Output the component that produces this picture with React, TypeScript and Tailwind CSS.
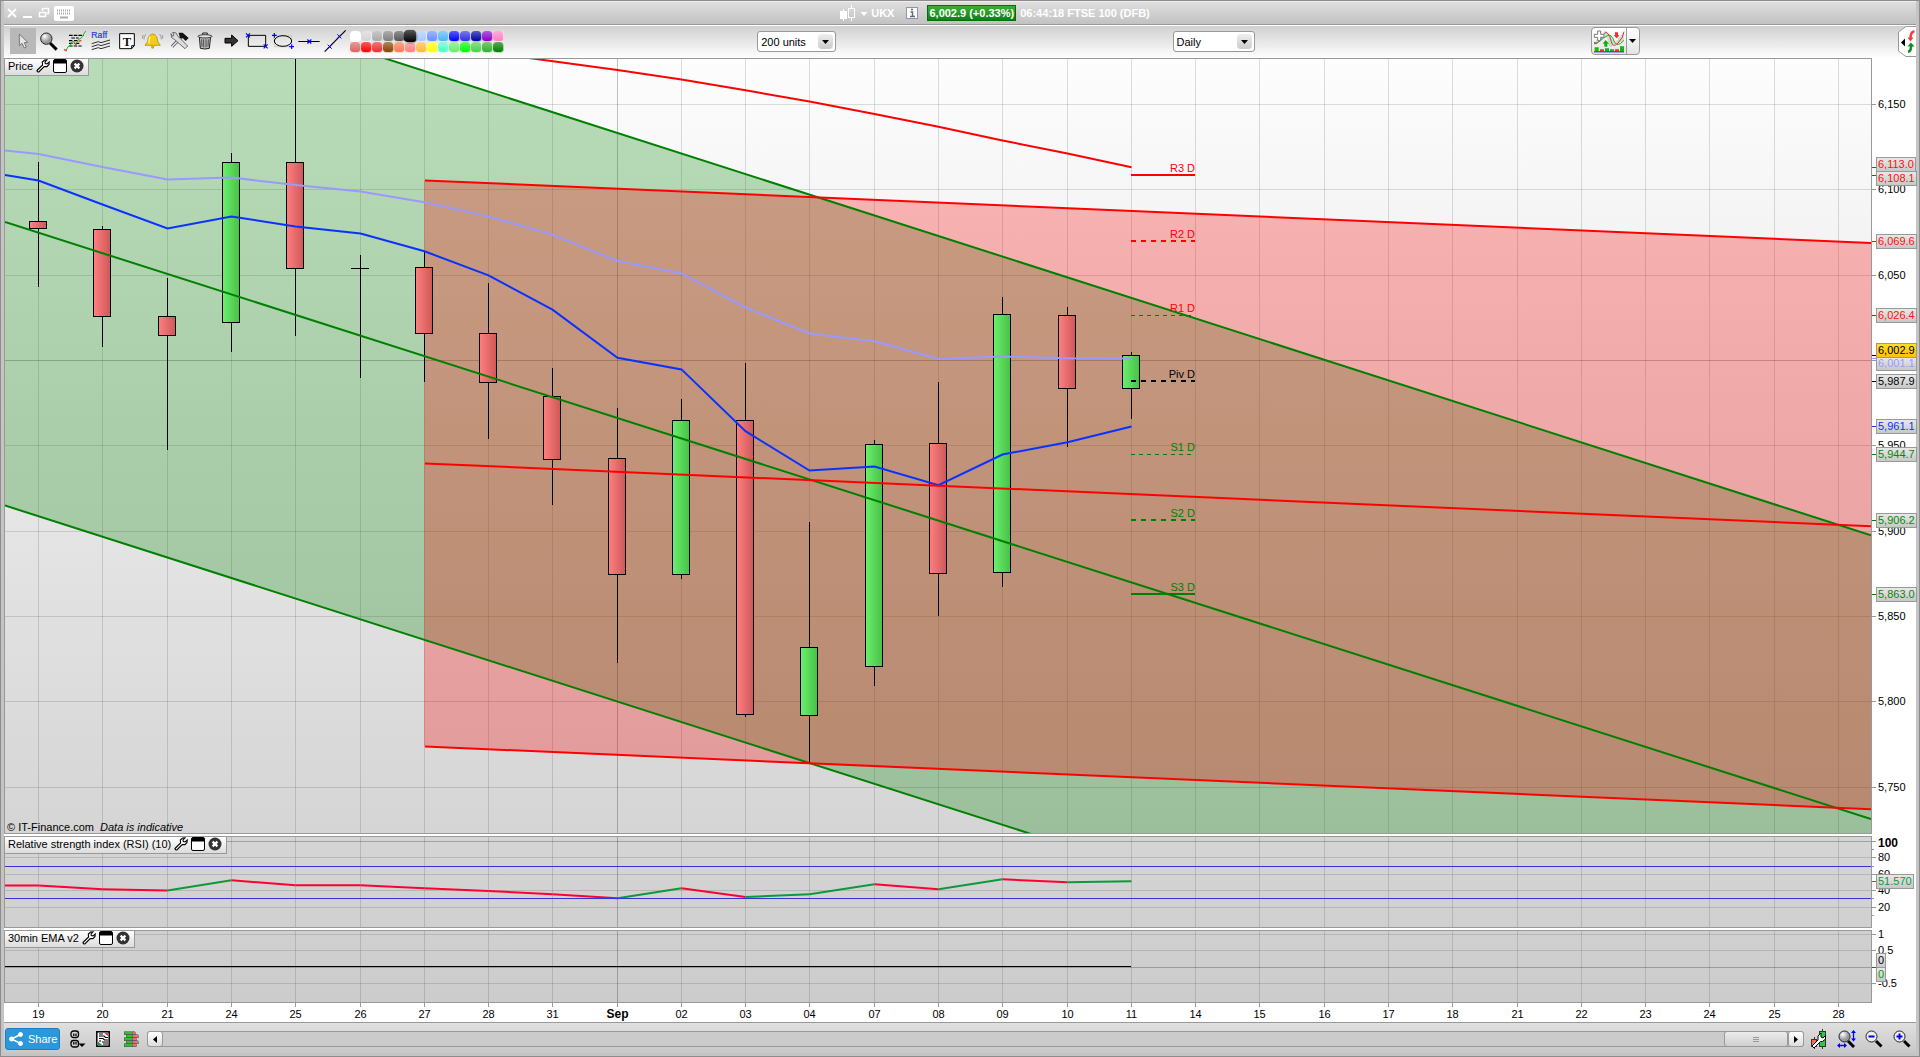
import React from "react";

type Pt = [number, number];

/* ---------- chart data (drawing units) ---------- */

const DATES = [
  "19", "20", "21", "24", "25", "26", "27", "28", "31", "Sep", "02", "03", "04", "07", "08",
  "09", "10", "11", "14", "15", "16", "17", "18", "21", "22", "23", "24", "25", "28",
];
const colX = (i: number) => Math.floor(38.62 + i * 64.28);

type Candle = { i: number; hi: number; lo: number; top: number; bottom: number; up?: boolean };
const CANDLES: Candle[] = [
  { i: 0, hi: 162, lo: 287, top: 221, bottom: 229 },
  { i: 1, hi: 226, lo: 347, top: 229, bottom: 317 },
  { i: 2, hi: 278, lo: 450, top: 316, bottom: 336 },
  { i: 3, hi: 153, lo: 352, top: 162, bottom: 323, up: true },
  { i: 4, hi: 59, lo: 336, top: 162, bottom: 269 },
  { i: 5, hi: 255, lo: 378, top: 268, bottom: 269 },
  { i: 6, hi: 252, lo: 382, top: 267, bottom: 334 },
  { i: 7, hi: 283, lo: 439, top: 333, bottom: 383 },
  { i: 8, hi: 368, lo: 505, top: 396, bottom: 460 },
  { i: 9, hi: 408, lo: 663, top: 458, bottom: 575 },
  { i: 10, hi: 399, lo: 579, top: 420, bottom: 575, up: true },
  { i: 11, hi: 363, lo: 717, top: 420, bottom: 715 },
  { i: 12, hi: 522, lo: 763, top: 647, bottom: 716, up: true },
  { i: 13, hi: 440, lo: 686, top: 444, bottom: 667, up: true },
  { i: 14, hi: 382, lo: 616, top: 443, bottom: 574 },
  { i: 15, hi: 297, lo: 587, top: 314, bottom: 573, up: true },
  { i: 16, hi: 307, lo: 447, top: 315, bottom: 389 },
  { i: 17, hi: 352, lo: 419, top: 355, bottom: 389, up: true },
];

const FAST = [180.5, 204.5, 228.5, 216.5, 226.5, 233.5, 251.3, 275.4, 309.7, 357.7, 369.4, 431.2, 470.5, 466.5, 485.2, 454.5, 442.3, 426.5];
const SLOW = [154, 167, 179.5, 177.5, 185, 191.5, 202.3, 216.6, 234.6, 261, 273.4, 307.5, 333.4, 341.3, 359, 356.5, 358.3, 358.5];
const LONG = [70, 79.4, 90.3, 101.6, 113.9, 126.7, 140.5, 153.5, 167.3];
const RSI = [885.5, 889.3, 890.5, 880.3, 885.3, 885.3, 888.3, 891, 894.3, 898.3, 888.3, 897, 894.3, 884.3, 889.3, 879.3, 882.3, 881.3];

const series = (ys: number[], first: Pt, from = 0) =>
  [first, ...ys.map((y, k): Pt => [colX(k + from) + 0.5, y])].map((p) => p.join(",")).join(" ");

const PIVOTS = [
  { label: "R3 D", y: 175, w: 2, dash: undefined, text: "text-[#ff0000]", color: "#ff0000" },
  { label: "R2 D", y: 241, w: 2, dash: "5 5", text: "text-[#ff0000]", color: "#ff0000" },
  { label: "R1 D", y: 315.5, w: 1, dash: "4 4", text: "text-[#ff0000]", color: "#ff0000" },
  { label: "Piv D", y: 381, w: 2, dash: "5 5", text: "text-black", color: "#000" },
  { label: "S1 D", y: 454.5, w: 1, dash: "4 4", text: "text-[#008000]", color: "#008000" },
  { label: "S2 D", y: 520, w: 2, dash: "5 5", text: "text-[#008000]", color: "#008000" },
  { label: "S3 D", y: 594, w: 2, dash: undefined, text: "text-[#008000]", color: "#008000" },
];

type AxisLabel = { text: string; y: number; bold?: boolean };
type AxisTag = { text: string; top: number; tick: number; tone: string; line: string; gold?: boolean };

const PRICE_AXIS: AxisLabel[] = [
  { text: "6,150", y: 104 }, { text: "6,100", y: 189 }, { text: "6,050", y: 275 },
  { text: "", y: 360 }, { text: "5,950", y: 445 }, { text: "5,900", y: 531 },
  { text: "5,850", y: 616 }, { text: "5,800", y: 701 }, { text: "5,750", y: 787 },
];
const RED = "text-[#ff1010]";
const GREEN = "text-[#0a860a]";
const PRICE_TAGS: AxisTag[] = [
  { text: "6,113.0", top: 157, tick: 167, tone: RED, line: "bg-[#ff0000]" },
  { text: "6,108.1", top: 171, tick: 175, tone: RED, line: "bg-[#ff0000]" },
  { text: "6,069.6", top: 234, tick: 241, tone: RED, line: "bg-[#ff0000]" },
  { text: "6,026.4", top: 308, tick: 315, tone: RED, line: "bg-[#ff0000]" },
  { text: "6,001.1", top: 356, tick: 358, tone: "text-[#9999ff]", line: "bg-[#9999ff]" },
  { text: "6,002.9", top: 343, tick: 355, tone: "text-black", line: "bg-black", gold: true },
  { text: "5,987.9", top: 374, tick: 381, tone: "text-black", line: "bg-black" },
  { text: "5,961.1", top: 419, tick: 426, tone: "text-[#0a32ff]", line: "bg-[#0a32ff]" },
  { text: "5,944.7", top: 447, tick: 454, tone: GREEN, line: "bg-[#008000]" },
  { text: "5,906.2", top: 513, tick: 520, tone: GREEN, line: "bg-[#008000]" },
  { text: "5,863.0", top: 587, tick: 594, tone: GREEN, line: "bg-[#008000]" },
];
const RSI_AXIS: AxisLabel[] = [
  { text: "100", y: 841, bold: true }, { text: "", y: 849 }, { text: "80", y: 857 },
  { text: "", y: 866 }, { text: "60", y: 874 }, { text: "40", y: 890 },
  { text: "", y: 898 }, { text: "20", y: 907 }, { text: "", y: 915 },
];
const RSI_TAGS: AxisTag[] = [{ text: "51.570", top: 874, tick: 881, tone: "text-[#0a9a3a]", line: "bg-[#0a9a3a]" }];
const EMA_AXIS: AxisLabel[] = [{ text: "1", y: 934 }, { text: "0.5", y: 950 }, { text: "-0.5", y: 983 }];
const EMA_TAGS: AxisTag[] = [
  { text: "0", top: 953, tick: 967, tone: "text-black", line: "bg-[#008000]" },
  { text: "0", top: 967, tick: 967, tone: "text-[#00a000]", line: "bg-[#008000]" },
];

/* ---------- chart parts ---------- */

const left = (x: number) => `${((x - 5) / 1866) * 100}%`;

function Axis({ y0, h, labels, tags }: { y0: number; h: number; labels: AxisLabel[]; tags: AxisTag[] }) {
  const at = (y: number) => ({ top: `${((y - y0) / h) * 100}%` });
  return (
    <div className="relative my-px w-11 shrink-0">
      {labels.map((l, k) => (
        <React.Fragment key={k}>
          <div className={`absolute left-0 h-px bg-[#999] ${l.text || h > 500 ? "w-1" : "w-0.5"}`} style={at(l.y)} />
          {l.text && (
            <span
              className={`absolute left-1.5 -mt-2 text-black ${l.bold ? "text-xs leading-5 font-bold" : "text-[11px] leading-4"}`}
              style={at(l.y)}
            >
              {l.text}
            </span>
          )}
        </React.Fragment>
      ))}
      {tags.map((t, k) => (
        <React.Fragment key={k}>
          <div className={`absolute left-0 h-px w-1 ${t.line}`} style={at(t.tick)} />
          <span
            className={`absolute left-1 h-[15px] border border-[#999] px-px text-[11px] leading-[13px] ${t.tone} ${
              t.gold ? "bg-linear-to-b from-[#ffe020] to-[#ffc010]" : "bg-linear-to-b from-[#e8e8e8] to-[#c8c8c8]"
            }`}
            style={at(t.top)}
          >
            {t.text}
          </span>
        </React.Fragment>
      ))}
    </div>
  );
}

function Wrench() {
  return (
    <svg className="h-3.5 w-3.5" viewBox="0 0 14 14" fill="#fff" stroke="#000" strokeWidth="1.1">
      <path d="M1 11.5 L6.6 6 L6.3 3 L8.5 1 L11 .8 L9 3 L9.3 4.6 L11 5 L13.2 3 L13 5.5 L11 7.6 L8.2 7.5 L2.8 13 Q1.500 13.400 1 11.500Z" />
    </svg>
  );
}

function PanelTag({ title }: { title: string }) {
  return (
    <div className="absolute top-0 left-0 flex h-[17px] items-center gap-[3px] border-r border-b border-[#999] bg-linear-to-b from-white to-[#dcdcdc] pr-1 pb-0.5 pl-[3px] text-[11px] leading-[14px] whitespace-nowrap text-black">
      <span>{title}</span>
      <button aria-label={`${title} settings`}><Wrench /></button>
      <button aria-label={`${title} window`}>
        <svg className="h-3.5 w-3.5" viewBox="0 0 14 14">
          <rect x=".5" y=".5" width="13" height="13" rx="1.500" fill="#fff" stroke="#000" />
          <path d="M1 1h12v3.500H1z" fill="#000" />
        </svg>
      </button>
      <button aria-label={`Close ${title}`}>
        <svg className="h-3.5 w-3.5" viewBox="0 0 14 14">
          <circle cx="7" cy="7" r="6.500" fill="#333" />
          <path d="M4.600 4.600l4.800 4.800M9.400 4.600l-4.800 4.800" stroke="#fff" strokeWidth="2.200" />
        </svg>
      </button>
    </div>
  );
}

function GridLines({ y0, y1, rows, strong }: { y0: number; y1: number; rows: number[]; strong?: number }) {
  return (
    <g shapeRendering="crispEdges" strokeWidth="1">
      {DATES.map((_, i) => (
        <path key={i} d={`M${colX(i) + 0.5} ${y0}V${y1}`} stroke="#000" strokeOpacity={DATES[i] === "Sep" ? 0.24 : 0.13} />
      ))}
      {rows.map((y) => (
        <path key={y} d={`M5 ${y + 0.5}H1871`} stroke="#000" strokeOpacity={y === strong ? 0.24 : 0.13} />
      ))}
    </g>
  );
}

function PricePanel() {
  return (
    <section className="flex min-h-0 flex-[776]">
      <div className="relative min-w-0 flex-1 border border-[#999] bg-linear-to-b from-[#fdfdfd] to-[#d5d5d5]">
        <svg className="absolute inset-0 h-full w-full" viewBox="5 59 1866 774" preserveAspectRatio="none">
          <defs>
            <linearGradient id="up"><stop offset="0" stopColor="#6cf06c" /><stop offset="1" stopColor="#48c048" /></linearGradient>
            <linearGradient id="down"><stop offset="0" stopColor="#ff8080" /><stop offset="1" stopColor="#cc5858" /></linearGradient>
          </defs>
          <GridLines y0={59} y1={833} rows={PRICE_AXIS.map((l) => l.y)} strong={360} />
          <path d="M5 -63.600L1871 535.300V1102.900L5 505.500Z" fill="#008000" fillOpacity=".27" />
          <path d="M424 180.400L1871 243V809.300L424 746.500Z" fill="#ff0000" fillOpacity=".28" />
          <g shapeRendering="crispEdges">
            {CANDLES.map((c) => {
              const x = colX(c.i);
              return (
                <g key={c.i}>
                  <path d={`M${x + 0.5} ${c.hi}V${c.lo}`} stroke="#000" />
                  {c.bottom - c.top > 1 ? (
                    <rect x={x - 8.5} y={c.top + 0.5} width="17" height={c.bottom - c.top - 1} fill={c.up ? "url(#up)" : "url(#down)"} stroke="#000" />
                  ) : (
                    <path d={`M${x - 9} ${c.top + 0.5}h18`} stroke="#000" />
                  )}
                </g>
              );
            })}
          </g>
          <g fill="none" strokeWidth="2">
            <polyline points={series(SLOW, [5, 150.5])} stroke="#9999ff" />
            <polyline points={series(FAST, [5, 175])} stroke="#0a32ff" />
            <polyline points={series(LONG, [529, 58], 9)} stroke="#ff0000" />
            <path d="M5 -63.600L1871 535.300M5 222L1871 819M5 505.500L1871 1102.900" stroke="#008000" />
            <path d="M425 180.400L1871 243M425 463.400L1871 526.300M425 746.500L1871 809.300" stroke="#ff0000" />
            {PIVOTS.map((p) => (
              <path key={p.label} d={`M1131 ${p.y}h64`} stroke={p.color} strokeWidth={p.w} strokeDasharray={p.dash} shapeRendering="crispEdges" />
            ))}
          </g>
        </svg>
        {PIVOTS.map((p) => (
          <span
            key={p.label}
            className={`absolute -translate-x-full -translate-y-full text-[11px] leading-[14px] whitespace-nowrap ${p.text}`}
            style={{ left: left(1195), top: `${((Math.floor(p.y) - 59) / 774) * 100}%` }}
          >
            {p.label}
          </span>
        ))}
        <PanelTag title="Price" />
        <p className="absolute bottom-0 left-0.5 text-[11px] leading-3 whitespace-nowrap text-black">
          © IT-Finance.com <i className="ml-[3px]">Data is indicative</i>
        </p>
      </div>
      <Axis y0={59} h={774} labels={PRICE_AXIS} tags={PRICE_TAGS} />
    </section>
  );
}

function RsiPanel() {
  return (
    <section className="flex min-h-0 flex-[92]">
      <div className="relative min-w-0 flex-1 border border-[#999] bg-linear-to-b from-[#d5d5d5] to-[#d0d0d0]">
        <svg className="absolute inset-0 h-full w-full" viewBox="5 837 1866 90" preserveAspectRatio="none">
          <GridLines y0={837} y1={927} rows={[841, 857, 874, 890, 907]} strong={841} />
          <g strokeWidth="2" strokeLinecap="butt">
            <path d={`M5 885.500H${colX(0) + 0.5}`} stroke="#ff0033" />
            {RSI.slice(1).map((y, k) => (
              <path key={k} d={`M${colX(k) + 0.5} ${RSI[k]}L${colX(k + 1) + 0.5} ${y}`} stroke={y < RSI[k] ? "#0a9a3a" : "#ff0033"} />
            ))}
          </g>
          <path d="M5 866.500H1871M5 898.500H1871" stroke="#3333dd" shapeRendering="crispEdges" />
        </svg>
        <PanelTag title="Relative strength index (RSI) (10)" />
      </div>
      <Axis y0={837} h={90} labels={RSI_AXIS} tags={RSI_TAGS} />
    </section>
  );
}

function EmaPanel() {
  return (
    <section className="flex min-h-0 flex-[73]">
      <div className="relative min-w-0 flex-1 border border-[#999] bg-linear-to-b from-[#d0d0d0] to-[#cccccc]">
        <svg className="absolute inset-0 h-full w-full" viewBox="5 931 1866 71" preserveAspectRatio="none">
          <GridLines y0={931} y1={1002} rows={[934, 950, 967, 983]} strong={967} />
          <path d="M5 966.500H1131" stroke="#000" shapeRendering="crispEdges" />
        </svg>
        <PanelTag title="30min EMA v2" />
      </div>
      <Axis y0={931} h={71} labels={EMA_AXIS} tags={EMA_TAGS} />
    </section>
  );
}

/* ---------- title bar ---------- */

function TitleBar() {
  return (
    <header className="flex h-6 shrink-0 items-center border-t border-b border-t-[#eee] border-b-[#999] bg-linear-to-b from-[#dedede] to-[#c2c2c2] text-[11px] font-bold text-white">
      <div className="flex items-center gap-1 pl-0.5">
        <button aria-label="Close window">
          <svg className="h-3 w-3" viewBox="0 0 12 12" stroke="#fff" strokeWidth="2"><path d="M2 2l8 8M10 2l-8 8" /></svg>
        </button>
        <button aria-label="Minimize window">
          <svg className="h-3 w-3" viewBox="0 0 12 12" stroke="#fff" strokeWidth="2"><path d="M1 10h9" /></svg>
        </button>
        <button aria-label="Restore window">
          <svg className="h-3 w-3" viewBox="0 0 12 12" fill="none" stroke="#fff" strokeWidth="1.500"><path d="M4.500 4V1.500h6v5H8.500" /><rect x="1.500" y="5.500" width="6" height="4" /></svg>
        </button>
        <button aria-label="Keyboard">
          <svg className="h-[15px] w-5" viewBox="0 0 20 15">
            <rect width="20" height="15" rx="2" fill="#fff" />
            <path d="M3 4.500h14M3 7.500h14" stroke="#aaa" strokeWidth="2" strokeDasharray="1 1" />
            <path d="M6 11.500h8" stroke="#aaa" strokeWidth="2" />
          </svg>
        </button>
      </div>
      <div className="flex flex-1 items-center justify-center">
        <button className="flex items-center gap-[3px]" aria-label="UKX chart">
          <svg className="h-4 w-7" viewBox="0 0 28 16" fill="none" stroke="#fff">
            <path d="M3.500 4v12" /><rect x=".5" y="6.500" width="6" height="7" fill="#fff" />
            <path d="M11.500 0v3M11.500 13v3" /><rect x="8.500" y="3.500" width="6" height="9" />
            <path d="M20.500 7h7l-3.500 4z" fill="#fff" stroke="none" />
          </svg>
          <span>UKX</span>
        </button>
        <button aria-label="Information" className="ml-3">
          <svg className="h-3 w-3" viewBox="0 0 12 12">
            <rect x=".5" y=".5" width="11" height="11" fill="#fff" stroke="#8a9aa0" />
            <path d="M4.500 5h2v4M4 9.500h5M5 2.500h2" stroke="#667" strokeWidth="1.500" fill="none" />
          </svg>
        </button>
        <span className="ml-[9px] border border-[#007000] bg-linear-to-b from-[#38b038] to-[#0c820c] px-px leading-[14px]">6,002.9 (+0.33%)</span>
        <span className="ml-1 whitespace-pre">06:44:18 FTSE 100 (DFB)</span>
      </div>
    </header>
  );
}

/* ---------- toolbar ---------- */

const BLUE = "#0000ff";
const cross = (x: number, y: number) => `M${x - 6} ${y - 6}l12 12M${x + 6} ${y - 6}l-12 12`;
const plus = (x: number, y: number) => `M${x - 7} ${y}h14M${x} ${y - 7}v14`;

const TOOLS: { name: string; art: React.ReactNode }[] = [
  { name: "Pointer", art: <path d="M58 102v35l8-7 7 14 6-3-6-13 10-1z" fill="#e6e6e6" stroke="#777" strokeWidth="3" /> },
  {
    name: "Zoom",
    art: (
      <>
        <path d="M150 129l20 20" stroke="#000" strokeWidth="9" />
        <circle cx="139" cy="116" r="17" fill="url(#lens)" stroke="#222" strokeWidth="3" />
      </>
    ),
  },
  {
    name: "Trend",
    art: (
      <>
        <path d="M207 106h44M214 114h22M207 122h10M222 122h14M207 130h12M228 130h10M207 138h38" stroke="#000" strokeWidth="3.500" strokeDasharray="11 3" />
        <path d="M198 152l6-12 6-2 8-16 8 12 10-16 8-4 13-21" fill="none" stroke="#10c020" strokeWidth="3" />
        <path d="M192 148l8 5M222 128l8 6M236 124l8-3" stroke="#ff3030" strokeWidth="4" />
      </>
    ),
  },
  {
    name: "Raff",
    art: (
      <>
        <text x="274" y="114" fontSize="26" fill="#2040e0" stroke="#2040e0" strokeWidth=".6" fontFamily="Liberation Sans, sans-serif">Raff</text>
        <path d="M275 131l20-6 8 3 27-8M275 140l20-6 8 3 27-8M275 149l20-6 8 3 27-8" fill="none" stroke="#333" strokeWidth="3" />
      </>
    ),
  },
  {
    name: "Text",
    art: (
      <>
        <path d="M359 101h44v36l-8 9h-36z" fill="#fff" stroke="#000" strokeWidth="3" />
        <path d="M395 146v-9h8" fill="none" stroke="#000" strokeWidth="3" />
        <text x="368" y="137" fontSize="38" fontWeight="bold" fill="#111" fontFamily="Liberation Serif, serif">T</text>
      </>
    ),
  },
  {
    name: "Alert",
    art: (
      <>
        <path d="M458 102c-12 2-14 12-15 22l-8 12h46l-8-12c-1-10-3-20-15-22z" fill="#f4cc18" stroke="#a08000" strokeWidth="2" />
        <path d="M450 110c-3 6-3 14-3 20" stroke="#fff6a0" strokeWidth="4" fill="none" />
        <circle cx="458" cy="141" r="5" fill="#e0a800" />
        <path d="M437 103q-6 7-5 15M430 105q-4 6-2 11M479 103q6 7 5 15M486 105q4 6 2 11" fill="none" stroke="#777" strokeWidth="2" />
      </>
    ),
  },
  {
    name: "Tools",
    art: (
      <>
        <path d="M516 140l34-34" stroke="#555" strokeWidth="9" />
        <path d="M516 140l34-34" stroke="#eee" strokeWidth="4" />
        <path d="M536 98l12 0 18 16-9 9-9-9-8 0z" fill="#111" />
        <path d="M513 101l2 12 8 5 32 28 8-8-30-30-5-9-10-2 4 9-4 3z" fill="#ddd" stroke="#555" strokeWidth="2.500" />
      </>
    ),
  },
  {
    name: "Delete",
    art: (
      <>
        <path d="M598 110l3 35q13 4 27 0l4-35z" fill="#bbb" stroke="#222" strokeWidth="3" />
        <path d="M605 118l1 22M611 118v24M618 118v24M625 118l-1 22" stroke="#333" strokeWidth="2.500" />
        <ellipse cx="615" cy="109" rx="21" ry="5" fill="#ddd" stroke="#222" strokeWidth="2.500" />
        <path d="M608 104v-5h14v5" fill="none" stroke="#222" strokeWidth="3" />
      </>
    ),
  },
  { name: "Arrow", art: <path d="M675 115h20v-10l19 17-19 17v-10h-20z" fill="#333" stroke="#000" strokeWidth="3" /> },
  {
    name: "Rectangle",
    art: (
      <>
        <path d="M745 106h52v33h-52z" fill="none" stroke="#000" strokeWidth="3" />
        <path d={cross(744, 106) + cross(797, 139)} stroke={BLUE} strokeWidth="3.500" />
      </>
    ),
  },
  {
    name: "Ellipse",
    art: (
      <>
        <path d="M823 107h52v33h-52z" fill="none" stroke="#bbb" strokeWidth="2" />
        <ellipse cx="849" cy="123" rx="26" ry="16" fill="none" stroke="#000" strokeWidth="3" />
        <path d={plus(823, 106) + plus(875, 140)} stroke={BLUE} strokeWidth="3.500" />
      </>
    ),
  },
  {
    name: "Horizontal line",
    art: (
      <>
        <path d="M895 124.500h64" stroke="#000" strokeWidth="3" />
        <path d={cross(928, 124.5)} stroke={BLUE} strokeWidth="3.500" />
      </>
    ),
  },
  {
    name: "Line",
    art: (
      <>
        <path d="M974 155l63-64" stroke="#000" strokeWidth="3.500" />
        <path d={cross(989, 140) + cross(1018, 109)} stroke={BLUE} strokeWidth="3" />
      </>
    ),
  },
];

const PALETTE = [
  ["bg-[#ffffff]", "bg-[#d4d4d4]", "bg-[#aaaaaa]", "bg-[#808080]", "bg-[#555555]", "bg-[#000000]", "bg-[#a8c8ff]", "bg-[#6890ff]", "bg-[#50b4f8]", "bg-[#0000ff]", "bg-[#3030e0]", "bg-[#0000a0]", "bg-[#8800c8]", "bg-[#ff80c0]"],
  ["bg-[#dc6464]", "bg-[#ff0000]", "bg-[#e83030]", "bg-[#884400]", "bg-[#ff7850]", "bg-[#ff8080]", "bg-[#ffb840]", "bg-[#ffff00]", "bg-[#50ffc8]", "bg-[#68f068]", "bg-[#00ff00]", "bg-[#4cd04c]", "bg-[#30b030]", "bg-[#008000]"],
];

function Dropdown({ label, value, width }: { label: string; value: string; width: string }) {
  return (
    <div className={`relative h-[21px] ${width}`}>
      <select
        aria-label={label}
        className="block h-full w-full appearance-none rounded-[3px] border border-[#999] bg-white pl-[3px] text-[11px] leading-4 text-black"
        defaultValue={value}
      >
        <option>{value}</option>
      </select>
      <div className="pointer-events-none absolute top-[3px] right-[3px] flex h-[15px] w-[15px] items-center justify-center rounded-sm bg-linear-to-b from-[#eee] to-[#ccc]">
        <svg className="h-1 w-[7px]" viewBox="0 0 7 4"><path d="M0 0h7L3.500 4z" /></svg>
      </div>
    </div>
  );
}

function Toolbar() {
  return (
    <div className="flex h-[33px] shrink-0 items-start border-t border-white bg-linear-to-b from-[#d0d0d0] to-white pt-0.5">
      <div className="flex pl-1.5">
        {TOOLS.map((t, i) => (
          <button key={t.name} aria-label={t.name} className={`h-[26px] w-[26px] ${i === 0 ? "bg-[#b8b8b8]" : ""}`}>
            <svg className="h-[26px] w-[26px] overflow-visible" viewBox={`${30 + 78 * i} 84 78 78`}>
              <defs><radialGradient id="lens" cx=".35" cy=".3"><stop offset="0" stopColor="#fff" /><stop offset="1" stopColor="#999" /></radialGradient></defs>
              {t.art}
            </svg>
          </button>
        ))}
      </div>
      <div className="ml-0.5 grid grid-cols-14 pt-[3px]">
        {PALETTE.flat().map((c, k) => (
          <button
            key={c}
            aria-label={`Colour ${k + 1}`}
            className={`h-[11px] w-[11px] rounded-sm border-r border-b border-white/60 bg-linear-to-b from-white/35 to-transparent ${c} ${
              k === 5 ? "relative z-10 scale-125 border-black" : ""
            }`}
          />
        ))}
      </div>
      <div className="grow-[253]" />
      <div className="pt-[3px]"><Dropdown label="Units" value="200 units" width="w-[79px]" /></div>
      <div className="grow-[336]" />
      <div className="pt-[3px]"><Dropdown label="Timeframe" value="Daily" width="w-[82px]" /></div>
      <div className="grow-[336]" />
      <div className="-mt-px flex h-7 rounded-[4px] border border-[#999] bg-linear-to-b from-white to-[#e4e4e4]">
        <button aria-label="Add indicator" className="w-[34px] pl-px">
          <svg className="h-6 w-8" viewBox="96 86 96 72">
            <path d="M99 130q14-24 26-26t16 20 12 14 18-22 18-22v26q-14 10-24 6t-22-24-14-6-14 28q-8 12-16 6" fill="#30c050" fillOpacity=".25" />
            <path d="M99 130q12 2 22-18t18-14 12 26 20 4 18-34" fill="none" stroke="#e03030" strokeWidth="3" />
            <path d="M99 126q8 6 18-4t22-16 20 16 30-2" fill="none" stroke="#30a030" strokeWidth="3" />
            <path d="M110 92h9v10h10v9h-10v10h-9v-10h-10v-9h10z" fill="#fff" stroke="#777" strokeWidth="3" />
            <path d="M162 96h9v9h5l-9 9-9-9h4z" fill="#f03030" />
            <path d="M130 139h9v-9h5l-10-11-9 11h5z" fill="#10b010" />
            <path d="M101 141h12v12h-12zM132 144h12v9h-12zM147 147h12v6h-12zM177 138h12v15h-12z" fill="#10b810" />
            <path d="M117 147h12v6h-12zM162 147h12v6h-12z" fill="#f03030" />
            <path d="M99 154.500h90" stroke="#1010d0" strokeWidth="3" />
          </svg>
        </button>
        <button aria-label="Indicator list" className="flex w-[13px] items-center justify-center border-l border-[#999]">
          <svg className="h-1 w-[7px]" viewBox="0 0 7 4"><path d="M0 0h7L3.500 4z" /></svg>
        </button>
      </div>
      <div className="grow-[258]" />
      <button aria-label="Trade panel" className="-mt-0.5 h-[31px] w-[18px]">
        <svg className="h-[31px] w-[18px]" viewBox="0 0 18 31">
          <path d="M18 .5H8L.5 6v19L8 30.500h10" fill="#fff" stroke="#999" />
          <path d="M3 16.500l4-4v8z" />
          <path d="M16.500 5.500q-4 0-4 7" fill="none" stroke="#f04040" strokeWidth="2.500" />
          <path d="M9.500 11.500h6l-3 4z" fill="#f04040" />
          <path d="M10 26q3.500-1 3-7" fill="none" stroke="#109020" strokeWidth="2.500" />
          <path d="M9.500 20.500h7l-3.500-4z" fill="#109020" />
        </svg>
      </button>
    </div>
  );
}

/* ---------- footer ---------- */

function ZoomGlyph({ mark }: { mark: string }) {
  return (
    <svg className="h-[18px] w-[18px]" viewBox="0 0 18 18">
      <path d="M11 11l5.500 5.500" stroke="#000" strokeWidth="3" />
      <circle cx="6.500" cy="6.500" r="5.500" fill="#eee" stroke="#222" />
      <path d={mark} stroke="#0000e0" strokeWidth="2" />
    </svg>
  );
}

function Footer() {
  return (
    <footer className="flex h-[30px] shrink-0 items-center bg-linear-to-b from-[#e0e0e0] to-[#c8c8c8] pt-0.5 pr-[5px] pl-px">
      <button className="flex h-[22px] w-[55px] items-center gap-[5px] rounded-[3px] border border-[#1c80c0] bg-[#2c98dc] pl-[3px] text-[11px] text-white">
        <svg className="h-3.5 w-3.5" viewBox="0 0 14 14" fill="#fff" stroke="#fff">
          <path d="M11.500 2.500L2.500 7l9 4.500" fill="none" strokeWidth="1.500" />
          <circle cx="2.500" cy="7" r="2" /><circle cx="11.500" cy="2.500" r="2" /><circle cx="11.500" cy="11.500" r="2" />
        </svg>
        Share
      </button>
      <button aria-label="Link windows" className="ml-2.5">
        <svg className="h-[18px] w-4" viewBox="0 0 16 18" fill="none" stroke="#000" strokeWidth="1.300">
          <rect x="1" y="1" width="7.500" height="6.500" rx="2.500" />
          <rect x="1" y="10.500" width="7.500" height="6.500" rx="2.500" />
          <path d="M3.800 3.500v2.500M6 3.500v2.500M3.800 12v2.500M6 12v2.500" />
          <path d="M8.500 13.500h7l-3.500 3.500z" fill="#000" stroke="none" />
        </svg>
      </button>
      <button aria-label="Report" className="ml-2.5">
        <svg className="h-4 w-3.5" viewBox="0 0 14 16">
          <rect x=".8" y=".8" width="12.400" height="14.400" fill="#fff" stroke="#000" strokeWidth="1.500" />
          <path d="M3 3h4M3 5h5l1.500 1.500H12M3 7.500h4l1.500 1.500H12M6 11h6M3 10h2M7 13h5" stroke="#000" strokeWidth="1.200" fill="none" />
          <path d="M8 2h4v3z" fill="#e04040" /><path d="M2 10.500v3.500h4z" fill="#10a020" />
        </svg>
      </button>
      <button aria-label="Order book" className="ml-[13px]">
        <svg className="h-4 w-4" viewBox="0 0 16 16" shapeRendering="crispEdges">
          <path d="M1 .5h8v3H1zM3 3.500h6v3H3zM1 6.500h8v3H1zM3 9.500h6v3H3zM1 12.500h8v3H1z" fill="#30c030" stroke="#555" strokeWidth=".6" />
          <path d="M9 .5h3v3H9zM9 3.500h6v3H9zM9 6.500h4v3H9zM9 9.500h6v3H9zM9 12.500h4v3H9z" fill="#f07070" stroke="#555" strokeWidth=".6" />
        </svg>
      </button>
      <div className="ml-2 flex h-4 flex-1 rounded-[3px] border border-[#999] bg-[#cbcbcb]">
        <button aria-label="Scroll left" className="-my-px -ml-px flex w-4 items-center justify-center rounded-[3px] border border-[#999] bg-linear-to-b from-white to-[#ddd]">
          <svg className="h-[7px] w-1" viewBox="0 0 4 7"><path d="M4 0v7L0 3.500z" /></svg>
        </button>
        <div className="flex-1" />
        <div role="scrollbar" aria-label="Chart position" aria-controls="charts" aria-valuenow={100} className="-my-px flex w-16 flex-col items-center justify-center gap-px rounded-[3px] border border-[#999] bg-linear-to-b from-[#ececec] to-[#d0d0d0]">
          <div className="h-px w-1.5 bg-[#999]" />
          <div className="h-px w-1.5 bg-[#999]" />
          <div className="h-px w-1.5 bg-[#999]" />
        </div>
        <button aria-label="Scroll right" className="-my-px -mr-px flex w-4 items-center justify-center rounded-[3px] border border-[#999] bg-linear-to-b from-white to-[#ddd]">
          <svg className="h-[7px] w-1" viewBox="0 0 4 7"><path d="M0 0v7l4-3.500z" /></svg>
        </button>
      </div>
      <button aria-label="Chart settings" className="ml-[7px]">
        <svg className="h-5 w-4" viewBox="0 0 16 20">
          <path d="M3.500 8v12M11.500 0v20" stroke="#333" />
          <rect x=".5" y="10.500" width="5" height="7" fill="#f07058" stroke="#333" />
          <rect x="8.500" y="2.500" width="6" height="15" fill="#30c840" stroke="#333" />
          <path d="M1 17l6-6V7l3-3v4l2 1 2.500-2.500V10l-3 2.500H9.500L3 19z" fill="#fff" stroke="#000" />
        </svg>
      </button>
      <button aria-label="Fit chart" className="ml-2.5">
        <svg className="h-[18px] w-5" viewBox="0 0 20 18">
          <path d="M11 11l6 6" stroke="#000" strokeWidth="3" />
          <circle cx="7.500" cy="6.500" r="5.500" fill="url(#lens)" stroke="#222" />
          <path d="M16.500 2v8M1 15.500h8" stroke="#0000ff" strokeWidth="1.300" />
          <path d="M14 3l2.500-3L19 3zM14 8.500l2.500 3 2.500-3zM3 13l-3 2.500L3 18zM7 13l3 2.500L7 18z" fill="#0000ff" />
        </svg>
      </button>
      <button aria-label="Zoom out" className="ml-2"><ZoomGlyph mark="M3.500 6.500h6" /></button>
      <button aria-label="Zoom in" className="ml-2.5"><ZoomGlyph mark="M3.500 6.500h6M6.500 3.500v6" /></button>
    </footer>
  );
}

export default function App() {
  return (
    <div className="flex h-screen min-h-[640px] flex-col overflow-hidden border border-[#8c8c8c] bg-[#c4c4c4] px-[3px] pb-[3px] font-['Liberation_Sans',Arial,sans-serif]">
      <TitleBar />
      <Toolbar />
      <main id="charts" className="flex min-h-0 flex-1 flex-col bg-white">
        <div className="flex min-h-0 flex-1 flex-col gap-0.5">
          <PricePanel />
          <RsiPanel />
          <EmaPanel />
        </div>
        <div className="relative mr-[45px] ml-px h-[19px] shrink-0">
          {DATES.map((d, i) => (
            <div key={i} className="absolute top-0 flex w-px flex-col items-center" style={{ left: left(colX(i)) }}>
              <div className="h-1 w-px bg-[#999]" />
              <span className={`leading-[15px] text-black ${d === "Sep" ? "text-xs font-bold" : "text-[11px]"}`}>{d}</span>
            </div>
          ))}
        </div>
        <div className="h-px shrink-0 bg-[#999]" />
      </main>
      <Footer />
    </div>
  );
}
